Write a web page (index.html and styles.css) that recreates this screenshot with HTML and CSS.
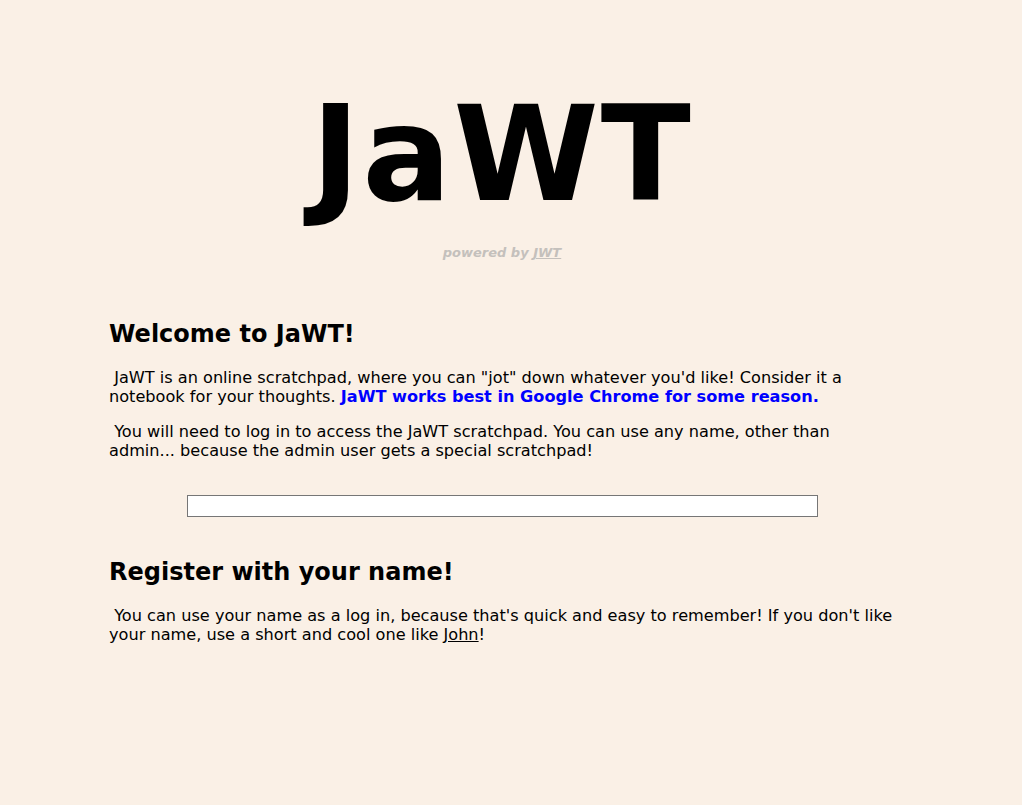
FILE: index.html
```html
<!DOCTYPE html>
<html>
<head>
<meta charset="utf-8">
<title>JaWT</title>
<link rel="stylesheet" href="styles.css">
</head>
<body>
<header class="masthead">
  <h1 class="logo">JaWT</h1>
  <div class="powered">powered by <a href="#" class="powered-link">JWT</a></div>
</header>
<main class="content">
  <h2 class="section-title">Welcome to JaWT!</h2>
  <p class="text">&nbsp;JaWT is an online scratchpad, where you can "jot" down whatever you'd like! Consider it a notebook for your thoughts. <strong class="highlight">JaWT works best in Google Chrome for some reason.</strong></p>
  <p class="text">&nbsp;You will need to log in to access the JaWT scratchpad. You can use any name, other than admin... because the admin user gets a special scratchpad!</p>
  <div class="login-row"><input class="login-input" type="text"></div>
  <h2 class="section-title">Register with your name!</h2>
  <p class="text">&nbsp;You can use your name as a log in, because that's quick and easy to remember! If you don't like your name, use a short and cool one like <a href="#" class="name-link">John</a>!</p>
</main>
</body>
</html>
```
FILE: styles.css
```css
html, body {
  margin: 0;
  padding: 0;
  background: #faf0e6;
  font-family: "DejaVu Sans", Verdana, sans-serif;
  color: #000;
}
.masthead {
  padding-top: 77px;
  padding-right: 18px;
  text-align: center;
}
.logo {
  margin: 0;
  font-size: 132px;
  font-weight: bold;
  line-height: 154px;
  letter-spacing: 2px;
}
.powered {
  margin-top: 14px;
  font-size: 13px;
  font-style: italic;
  font-weight: bold;
  color: #c4c0bc;
}
.powered-link {
  color: #c4c0bc;
}
.content {
  width: 788px;
  margin: 0 0 0 109px;
  padding-top: 60px;
}
.section-title {
  margin: 0 0 19px 0;
  font-size: 24px;
  line-height: 29px;
  font-weight: bold;
}
.text {
  margin: 0 0 16px 0;
  font-size: 16.15px;
  line-height: 19px;
}
.highlight {
  color: #0000ff;
}
.login-row {
  padding: 19px 0 41px 78px;
}
.login-input {
  display: block;
  box-sizing: border-box;
  width: 631px;
  height: 22px;
  margin: 0;
  border: 1px solid #767676;
  background: #fff;
}
.name-link {
  color: #000;
}
```
